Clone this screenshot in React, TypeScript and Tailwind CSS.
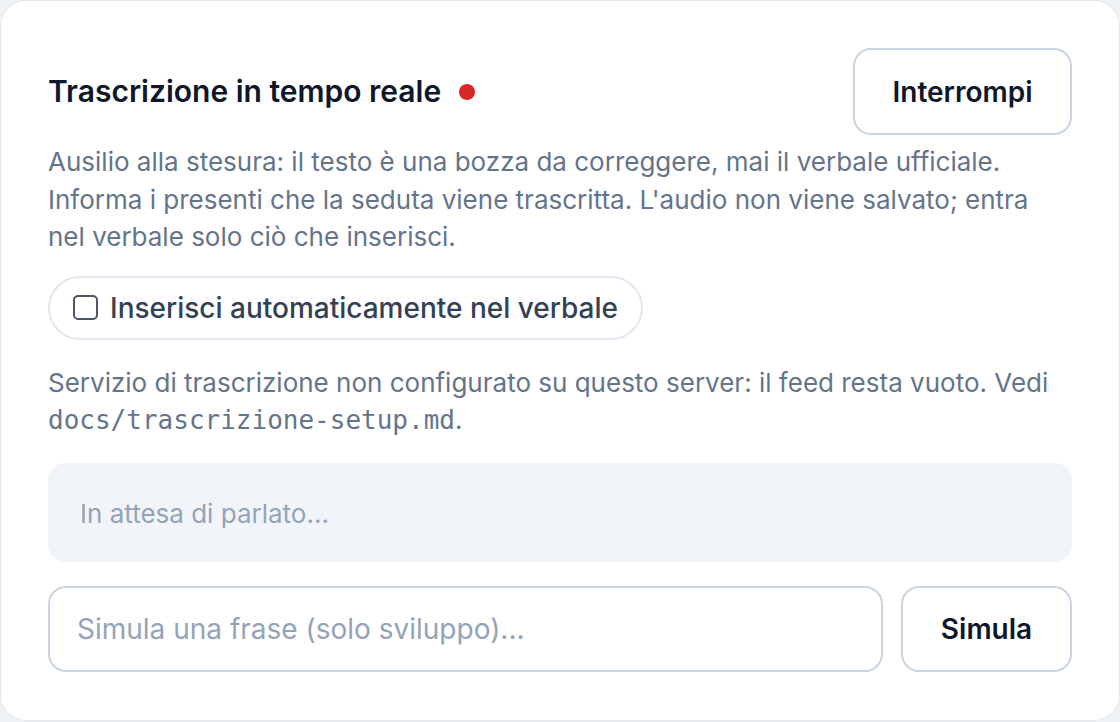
import { useState } from "react";

export default function App() {
    const [auto, setAuto] = useState(false);
    const [frase, setFrase] = useState("");

    return (
        <div className="w-[1120px] h-[722px] bg-[#eef2f7] font-['Inter',sans-serif]">
            <div className="h-[721px] w-full bg-white border border-[#e2e8f0] rounded-[26px] px-[47px] pt-[47px] flex flex-col">
                <div className="flex items-center justify-between">
                    <div className="flex items-center gap-[18px]">
                        <h2 className="text-[30px] font-semibold text-[#0f172a]">Trascrizione in tempo reale</h2>
                        <span className="w-[16px] h-[16px] rounded-full bg-[#dc2626]"></span>
                    </div>
                    <button className="w-[219px] h-[87px] rounded-[18px] border-2 border-[#cbd5e1] text-[28px] font-semibold text-[#0f172a] bg-white">
                        Interrompi
                    </button>
                </div>

                <p className="mt-[8px] text-[26px] leading-[37.5px] text-[#64748b]">
                    Ausilio alla stesura: il testo è una bozza da correggere, mai il verbale ufficiale.
                    <br />
                    Informa i presenti che la seduta viene trascritta. L'audio non viene salvato; entra
                    <br />
                    nel verbale solo ciò che inserisci.
                </p>

                <label className="mt-[20px] self-start flex items-center gap-[12px] h-[64px] pl-[23px] pr-[23px] rounded-full border-2 border-[#e2e8f0] cursor-pointer">
                    <input
                        type="checkbox"
                        checked={auto}
                        onChange={(e) => setAuto(e.target.checked)}
                        className="appearance-none w-[25px] h-[25px] rounded-[5px] border-2 border-[#4b5563] bg-white"
                    />
                    <span className="text-[28px] font-medium text-[#334155]">Inserisci automaticamente nel verbale</span>
                </label>

                <p className="mt-[24px] text-[26px] leading-[37.5px] text-[#64748b]">
                    Servizio di trascrizione non configurato su questo server: il feed resta vuoto. Vedi
                    <br />
                    <code className="font-['DejaVu_Sans_Mono',monospace] text-[26px]">docs/trascrizione-setup.md</code>.
                </p>

                <div className="mt-[23px] h-[99px] rounded-[18px] bg-[#f1f5f9] flex items-center px-[32px]">
                    <span className="text-[26px] text-[#94a3b8] mt-[3px]">In attesa di parlato...</span>
                </div>

                <div className="mt-[24px] flex gap-[18px]">
                    <input
                        value={frase}
                        onChange={(e) => setFrase(e.target.value)}
                        placeholder="Simula una frase (solo sviluppo)..."
                        className="flex-1 h-[86px] rounded-[18px] border-2 border-[#cbd5e1] px-[27px] text-[28px] text-[#0f172a] placeholder:text-[#94a3b8] outline-none"
                    />
                    <button className="w-[171px] h-[86px] rounded-[18px] border-2 border-[#cbd5e1] text-[28px] font-semibold text-[#0f172a] bg-white">
                        Simula
                    </button>
                </div>
            </div>
        </div>
    );
}
